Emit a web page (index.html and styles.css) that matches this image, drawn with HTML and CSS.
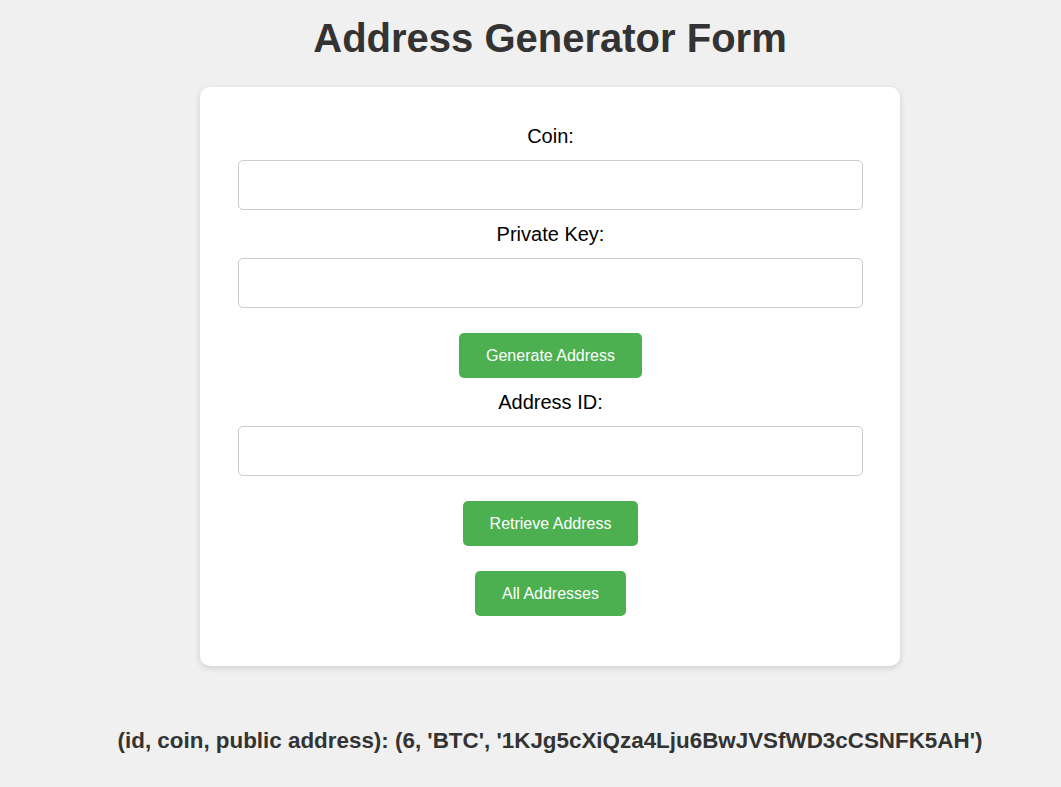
FILE: index.html
```html
<!DOCTYPE html>
<html lang="en">
<head>
<meta charset="utf-8">
<title>Address Generator Form</title>
<link rel="stylesheet" href="styles.css">
</head>
<body>
<div class="page">
  <h1 class="title">Address Generator Form</h1>
  <div class="card">
    <form class="form">
      <label class="label" for="coin">Coin:</label>
      <input class="input" id="coin" type="text">
      <label class="label" for="pk">Private Key:</label>
      <input class="input" id="pk" type="text">
      <button class="btn" type="button">Generate Address</button>
      <label class="label" for="aid">Address ID:</label>
      <input class="input" id="aid" type="text">
      <button class="btn" type="button">Retrieve Address</button>
      <button class="btn" type="button">All Addresses</button>
    </form>
  </div>
  <p class="result">(id, coin, public address): (6, 'BTC', '1KJg5cXiQza4Lju6BwJVSfWD3cCSNFK5AH')</p>
</div>
</body>
</html>
```
FILE: styles.css
```css
html, body {
  margin: 0;
  padding: 0;
  background: #f0f0f0;
  font-family: "Liberation Sans", Arial, sans-serif;
}
.page {
  padding-left: 39px;
  display: flex;
  flex-direction: column;
  align-items: center;
}
.title {
  margin: 15px 0 26px;
  font-size: 40px;
  line-height: 46px;
  font-weight: bold;
  color: #333;
  text-align: center;
}
.card {
  box-sizing: border-box;
  width: 700px;
  background: #fff;
  border-radius: 10px;
  box-shadow: 0 2px 6px rgba(0, 0, 0, 0.15);
  padding: 37px 37px 37px 38px;
}
.form {
  display: flex;
  flex-direction: column;
  align-items: center;
  gap: 12px;
}
.label {
  font-size: 20px;
  line-height: 24px;
  color: #000;
  text-align: center;
}
.input {
  box-sizing: border-box;
  width: 100%;
  height: 50px;
  border: 1px solid #ccc;
  border-radius: 5px;
  background: #fff;
  padding: 0 10px;
  font-size: 16px;
  font-family: inherit;
}
.btn {
  margin-top: 13px;
  margin-bottom: 0;
  height: 45px;
  padding: 0 27px;
  border: none;
  border-radius: 5px;
  background: #4caf50;
  color: #fff;
  font-family: inherit;
  font-size: 16px;
  line-height: 19px;
  cursor: pointer;
}
.btn:last-child {
  margin-bottom: 13px;
}
.result {
  margin: 62px 0 0;
  font-size: 22.4px;
  line-height: 26px;
  font-weight: bold;
  color: #333;
  text-align: center;
}
```
